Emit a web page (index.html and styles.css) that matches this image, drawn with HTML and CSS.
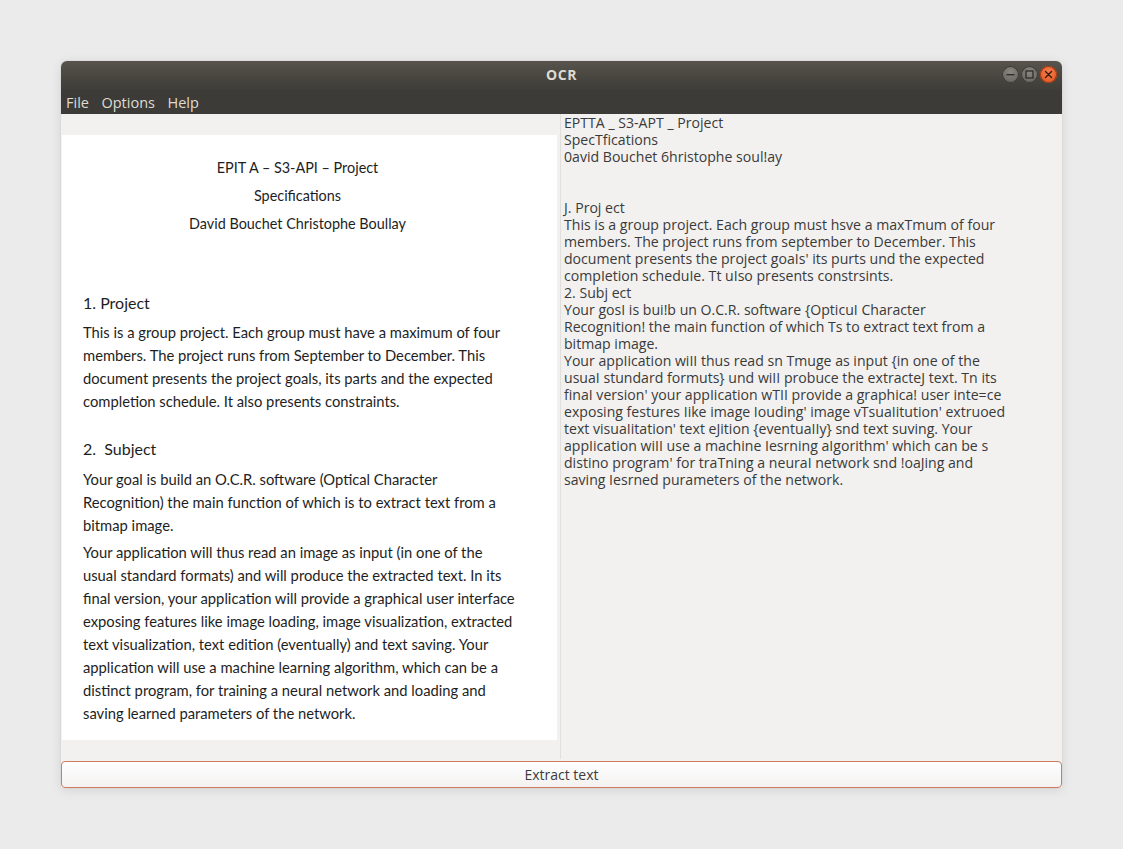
FILE: index.html
```html
<!DOCTYPE html>
<html>
<head>
<meta charset="utf-8">
<title>OCR</title>
<link rel="stylesheet" href="styles.css">
</head>
<body>
<div class="window">
  <div class="titlebar">
    <div class="title">OCR</div>
    <div class="controls">
      <span class="ctl ctl-min"><svg width="17" height="17" viewBox="0 0 17 17"><rect x="4.5" y="8" width="8" height="1.4" fill="#2e2d2a"/></svg></span>
      <span class="ctl ctl-max"><svg width="17" height="17" viewBox="0 0 17 17"><rect x="5" y="5" width="7" height="7" fill="none" stroke="#2e2d2a" stroke-width="1.3"/></svg></span>
      <span class="ctl ctl-close"><svg width="17" height="17" viewBox="0 0 17 17"><path d="M5.5 5.5 L11.5 11.5 M11.5 5.5 L5.5 11.5" stroke="#3a1a0c" stroke-width="1.4" stroke-linecap="round"/></svg></span>
    </div>
  </div>
  <div class="menubar">
    <span class="menu">File</span>
    <span class="menu">Options</span>
    <span class="menu">Help</span>
  </div>
  <div class="content">
    <div class="left">
      <div class="doc">
        <p class="center first">EPIT A – S3-API – Project</p>
        <p class="center">Specifications</p>
        <p class="center">David Bouchet Christophe Boullay</p>
        <h2 class="h-proj">1. Project</h2>
        <p class="body">This is a group project. Each group must have a maximum of four<br>members. The project runs from September to December. This<br>document presents the project goals, its parts and the expected<br>completion schedule. It also presents constraints.</p>
        <h2 class="h-subj">2.&nbsp; Subject</h2>
        <p class="body b2">Your goal is build an O.C.R. software (Optical Character<br>Recognition) the main function of which is to extract text from a<br>bitmap image.</p>
        <p class="body b3">Your application will thus read an image as input (in one of the<br>usual standard formats) and will produce the extracted text. In its<br>final version, your application will provide a graphical user interface<br>exposing features like image loading, image visualization, extracted<br>text visualization, text edition (eventually) and text saving. Your<br>application will use a machine learning algorithm, which can be a<br>distinct program, for training a neural network and loading and<br>saving learned parameters of the network.</p>
      </div>
    </div>
    <div class="sep"></div>
    <div class="right"><pre class="ocr">EPTTA _ S3-APT _ Project
SpecTfications
0avid Bouchet 6hristophe soul!ay


J. Proj ect
This is a group project. Each group must hsve a maxTmum of four
members. The project runs from september to December. This
document presents the project goaIs' its purts und the expected
compIetion scheduIe. Tt uIso presents constrsints.
2. Subj ect
Your gosI is bui!b un O.C.R. software {OpticuI Character
Recognition! the main function of which Ts to extract text from a
bitmap image.
Your appIication wiII thus read sn Tmuge as input {in one of the
usuaI stundard formuts} und wiII probuce the extracteJ text. Tn its
finaI version' your appIication wTII provide a graphica! user inte=ce
exposing festures Iike image Iouding' image vTsuaIitution' extruoed
text visuaIitation' text eJition {eventuaIIy} snd text suving. Your
appIication wiII use a machine Iesrning aIgorithm' which can be s
distino program' for traTning a neuraI network snd !oaJing and
saving Iesrned purameters of the network.</pre></div>
  </div>
  <button class="extract">Extract text</button>
</div>
</body>
</html>
```

FILE: styles.css
```css
html, body {
  margin: 0;
  padding: 0;
}
body {
  background: #ebebeb;
  width: 1123px;
  height: 849px;
  overflow: hidden;
  font-family: "Open Sans", "DejaVu Sans", sans-serif;
}
.window {
  margin: 61px 0 0 61px;
  width: 1001px;
  height: 727px;
  display: flex;
  flex-direction: column;
  background: #f2f1f0;
  border-radius: 6px 6px 0 0;
  box-shadow: 0 2px 12px rgba(0,0,0,0.10), 0 0 1px rgba(0,0,0,0.25);
  overflow: hidden;
}
.titlebar {
  height: 29px;
  flex: none;
  background: linear-gradient(#58544d, #47453f 60%, #3e3d39);
  display: flex;
  align-items: center;
  justify-content: center;
  position: relative;
}
.title {
  color: #dfdbd2;
  font-weight: bold;
  font-size: 14px;
  letter-spacing: 0.5px;
  margin-top: -2px;
}
.controls {
  position: absolute;
  right: 5px;
  top: 5px;
  display: flex;
  gap: 2px;
}
.ctl {
  width: 17px;
  height: 17px;
  border-radius: 50%;
  display: flex;
  align-items: center;
  justify-content: center;
}
.ctl-min, .ctl-max {
  background: radial-gradient(circle at 50% 35%, #8a8781, #5f5d58);
  box-shadow: inset 0 0 0 1px #3a3935;
}
.ctl-close {
  background: radial-gradient(circle at 50% 35%, #f47b4b, #e0541f);
  box-shadow: inset 0 0 0 1px #9c3a15;
}
.menubar {
  height: 24px;
  flex: none;
  background: #3c3b37;
  display: flex;
  align-items: center;
  padding-left: 5px;
  gap: 12.5px;
}
.menu {
  color: #dfdbd2;
  font-size: 14.5px;
  line-height: 24px;
  padding-top: 1px;
}
.content {
  flex: 1;
  display: flex;
  min-height: 0;
}
.left {
  width: 498px;
  flex: none;
  display: flex;
  align-items: center;
  padding-left: 1px;
}
.doc {
  width: 495px;
  height: 605px;
  background: #ffffff;
  box-sizing: border-box;
  padding: 19px 0 0 21px;
  font-family: "Lato", "Open Sans", sans-serif;
  color: #1e1e1e;
}
.doc p {
  margin: 0;
}
.doc .center {
  text-align: center;
  font-size: 14.4px;
  line-height: 28px;
  margin-left: -21px;
  width: 471px;
}
.doc h2 {
  font-weight: normal;
  font-size: 16px;
  margin: 0;
  line-height: 24px;
}
.doc .h-proj {
  margin-top: 53px;
}
.doc .h-subj {
  margin-top: 24.5px;
}
.doc .body {
  font-size: 14.75px;
  line-height: 23px;
  margin-top: 5.5px;
  white-space: nowrap;
}
.doc .body.b2 {
  margin-top: 6.5px;
}
.doc .body.b3 {
  margin-top: 4px;
}
.sep {
  width: 2px;
  flex: none;
  background: linear-gradient(90deg, #d9d7d3, #f9f9f8);
  margin: 0 0 2px 0;
}
.right {
  flex: 1;
  padding: 0 0 0 2px;
}
.ocr {
  margin: 0;
  font-family: "Open Sans", "DejaVu Sans", sans-serif;
  font-size: 14.1px;
  line-height: 17px;
  color: #3a3a3a;
  white-space: pre;
}
.extract {
  flex: none;
  height: 27px;
  margin: 0;
  border: 1px solid #cd7d5e;
  border-radius: 4px;
  background: linear-gradient(#ffffff, #f3f2f1);
  font-family: "Open Sans", "DejaVu Sans", sans-serif;
  font-size: 14px;
  color: #3c3c3c;
  padding: 0;
}
```
